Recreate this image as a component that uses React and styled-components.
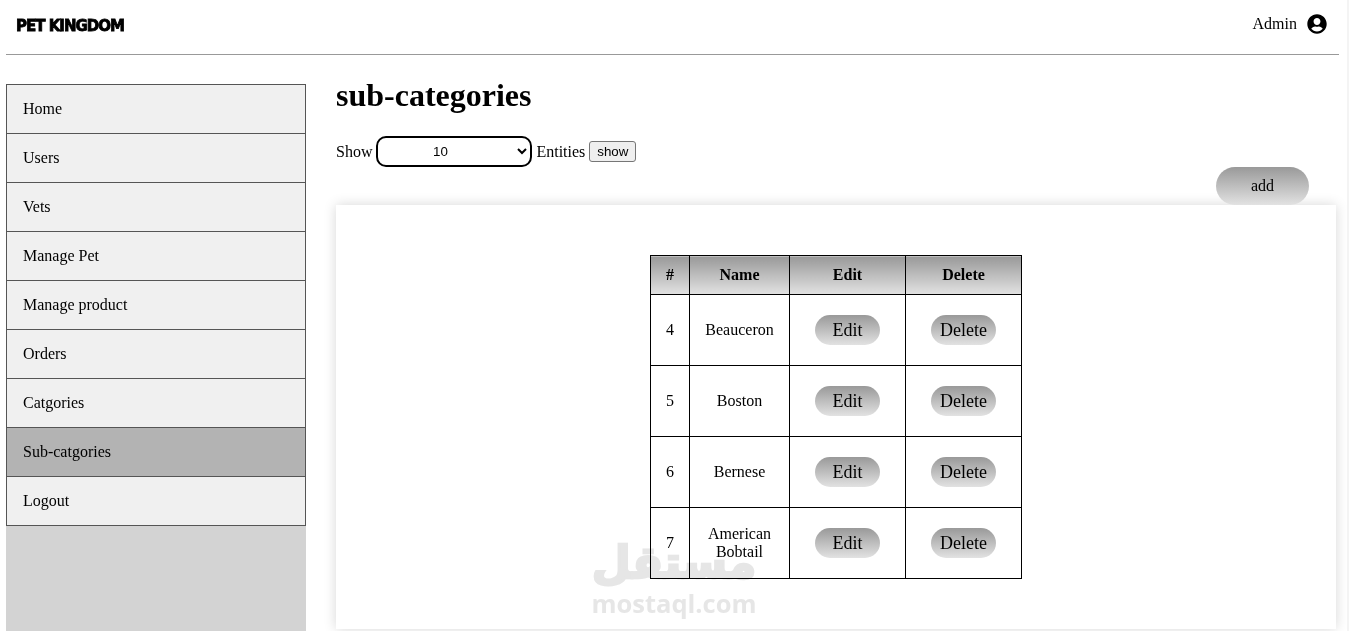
import React from "react";
import styled, { createGlobalStyle } from "styled-components";
import { FaUserCircle } from "react-icons/fa";

const GlobalStyle = createGlobalStyle`
  html, body {
    margin: 0;
    height: 631px;
    overflow: hidden;
    background: #f4f4f4;
    font-family: "Liberation Serif", "Times New Roman", serif;
    font-size: 16px;
    color: #000;
  }
`;

const Page = styled.div`
  width: 1347px;
  height: 631px;
  background: #fff;
  overflow: hidden;
  position: relative;
`;

const Header = styled.header`
  height: 48px;
  margin: 0 8px 0 6px;
  border-bottom: 1px solid #999;
  display: flex;
  align-items: center;
  justify-content: space-between;
  padding: 0 12px 6px 10px;
  box-sizing: content-box;
`;

const Logo = styled.div`
  padding-top: 3px;
  font-family: "DejaVu Sans", sans-serif;
  font-weight: 700;
  font-size: 15px;
  letter-spacing: -1px;
  -webkit-text-stroke: 0.8px #000;
`;

const UserBox = styled.div`
  display: flex;
  align-items: center;
  gap: 10px;
  font-size: 16px;
`;

const Body = styled.div`
  display: flex;
  padding: 29px 0 0 6px;
  gap: 30px;
`;

const Sidebar = styled.aside`
  width: 300px;
  height: 560px;
  background: #d3d3d3;
  flex: none;
`;

const MenuList = styled.ul`
  list-style: none;
  margin: 0;
  padding: 0;
  border: 1px solid #555;
`;

const MenuItem = styled.li`
  height: 48px;
  display: flex;
  align-items: center;
  padding-left: 16px;
  background: ${({ $active }) => ($active ? "#b3b3b3" : "#f0f0f0")};
  border-bottom: 1px solid #555;

  &:last-child {
    border-bottom: 0;
  }
`;

const Main = styled.main`
  width: 1000px;
  flex: none;
`;

const Title = styled.h1`
  font-size: 32px;
  font-weight: 700;
  line-height: 37px;
  margin: -7px 0 22px;
`;

const Controls = styled.div`
  display: flex;
  align-items: center;
  height: 31px;
`;

const Picker = styled.select`
  width: 156px;
  height: 31px;
  margin: 0 4px 0 4px;
  padding-right: 16px;
  border: 2px solid #000;
  border-radius: 10px;
  background: #fff;
  font-family: "Liberation Sans", Arial, sans-serif;
  font-size: 13.33px;
  text-align: center;
  color: #000;
  outline: none;
`;

const ShowButton = styled.button`
  width: 47px;
  height: 21px;
  margin-left: 4px;
  padding: 0;
  border: 1px solid #767676;
  border-radius: 3px;
  background: #efefef;
  font-family: "Liberation Sans", Arial, sans-serif;
  font-size: 13.33px;
  color: #000;
`;

const AddRow = styled.div`
  display: flex;
  justify-content: flex-end;
  padding-right: 27px;
`;

const PillButton = styled.button`
  border: 0;
  padding: 0;
  font-family: "Liberation Serif", "Times New Roman", serif;
  color: #000;
  background: linear-gradient(#999, #e2e2e2);
  width: ${({ $wide }) => ($wide ? "93px" : "65px")};
  height: ${({ $wide }) => ($wide ? "38px" : "30px")};
  border-radius: ${({ $wide }) => ($wide ? "19px" : "15px")};
  font-size: ${({ $wide }) => ($wide ? "16px" : "18px")};
`;

const Panel = styled.section`
  height: 374px;
  padding-top: 50px;
  background: #fff;
  box-shadow: 0 0 12px rgba(0, 0, 0, 0.16);
  display: flex;
  justify-content: center;
  align-items: flex-start;
`;

const Table = styled.table`
  border-collapse: collapse;
  table-layout: fixed;
  width: 372px;
  text-align: center;
`;

const Th = styled.th`
  box-sizing: border-box;
  height: 39px;
  padding: 0;
  border: 1px solid #000;
  background: linear-gradient(#999, #e2e2e2);
  font-size: 16px;
  width: ${({ $w }) => $w}px;
`;

const Td = styled.td`
  height: 70px;
  padding: 0;
  border: 1px solid #000;
  line-height: 18px;
`;

const Watermark = styled.div`
  position: absolute;
  left: 592px;
  top: 537px;
  width: 164px;
  display: flex;
  flex-direction: column;
  align-items: center;
  color: #e6e6e6;
  mix-blend-mode: multiply;
  pointer-events: none;
`;

const WatermarkArabic = styled.div`
  font-family: "DejaVu Sans", sans-serif;
  font-weight: 700;
  font-size: 45px;
  line-height: 52px;
  -webkit-text-stroke: 2.5px #e6e6e6;
`;

const WatermarkLatin = styled.div`
  font-family: "Open Sans", "Liberation Sans", sans-serif;
  font-weight: 700;
  font-size: 25.5px;
  line-height: 28px;
`;

const menu = ["Home", "Users", "Vets", "Manage Pet", "Manage product", "Orders", "Catgories", "Sub-catgories", "Logout"];

const rows = [
  { id: 4, name: "Beauceron" },
  { id: 5, name: "Boston" },
  { id: 6, name: "Bernese" },
  { id: 7, name: "American Bobtail" },
];

const App = () => {
  return (
    <Page>
      <GlobalStyle />
      <Header>
        <Logo>PET KINGDOM</Logo>
        <UserBox>
          Admin
          <FaUserCircle size={20} />
        </UserBox>
      </Header>
      <Body>
        <Sidebar>
          <MenuList>
            {menu.map((item) => (
              <MenuItem key={item} $active={item === "Sub-catgories"}>{item}</MenuItem>
            ))}
          </MenuList>
        </Sidebar>
        <Main>
          <Title>sub-categories</Title>
          <Controls>
            Show
            <Picker defaultValue="10">
              <option>10</option>
              <option>25</option>
              <option>50</option>
            </Picker>
            Entities
            <ShowButton>show</ShowButton>
          </Controls>
          <AddRow>
            <PillButton $wide>add</PillButton>
          </AddRow>
          <Panel>
            <Table>
              <thead>
                <tr>
                  <Th $w={39}>#</Th>
                  <Th $w={100}>Name</Th>
                  <Th $w={116}>Edit</Th>
                  <Th $w={116}>Delete</Th>
                </tr>
              </thead>
              <tbody>
                {rows.map((row) => (
                  <tr key={row.id}>
                    <Td>{row.id}</Td>
                    <Td>{row.name}</Td>
                    <Td><PillButton>Edit</PillButton></Td>
                    <Td><PillButton>Delete</PillButton></Td>
                  </tr>
                ))}
              </tbody>
            </Table>
          </Panel>
        </Main>
      </Body>
      <Watermark>
        <WatermarkArabic>مستقل</WatermarkArabic>
        <WatermarkLatin>mostaql.com</WatermarkLatin>
      </Watermark>
    </Page>
  );
};

export default App;
